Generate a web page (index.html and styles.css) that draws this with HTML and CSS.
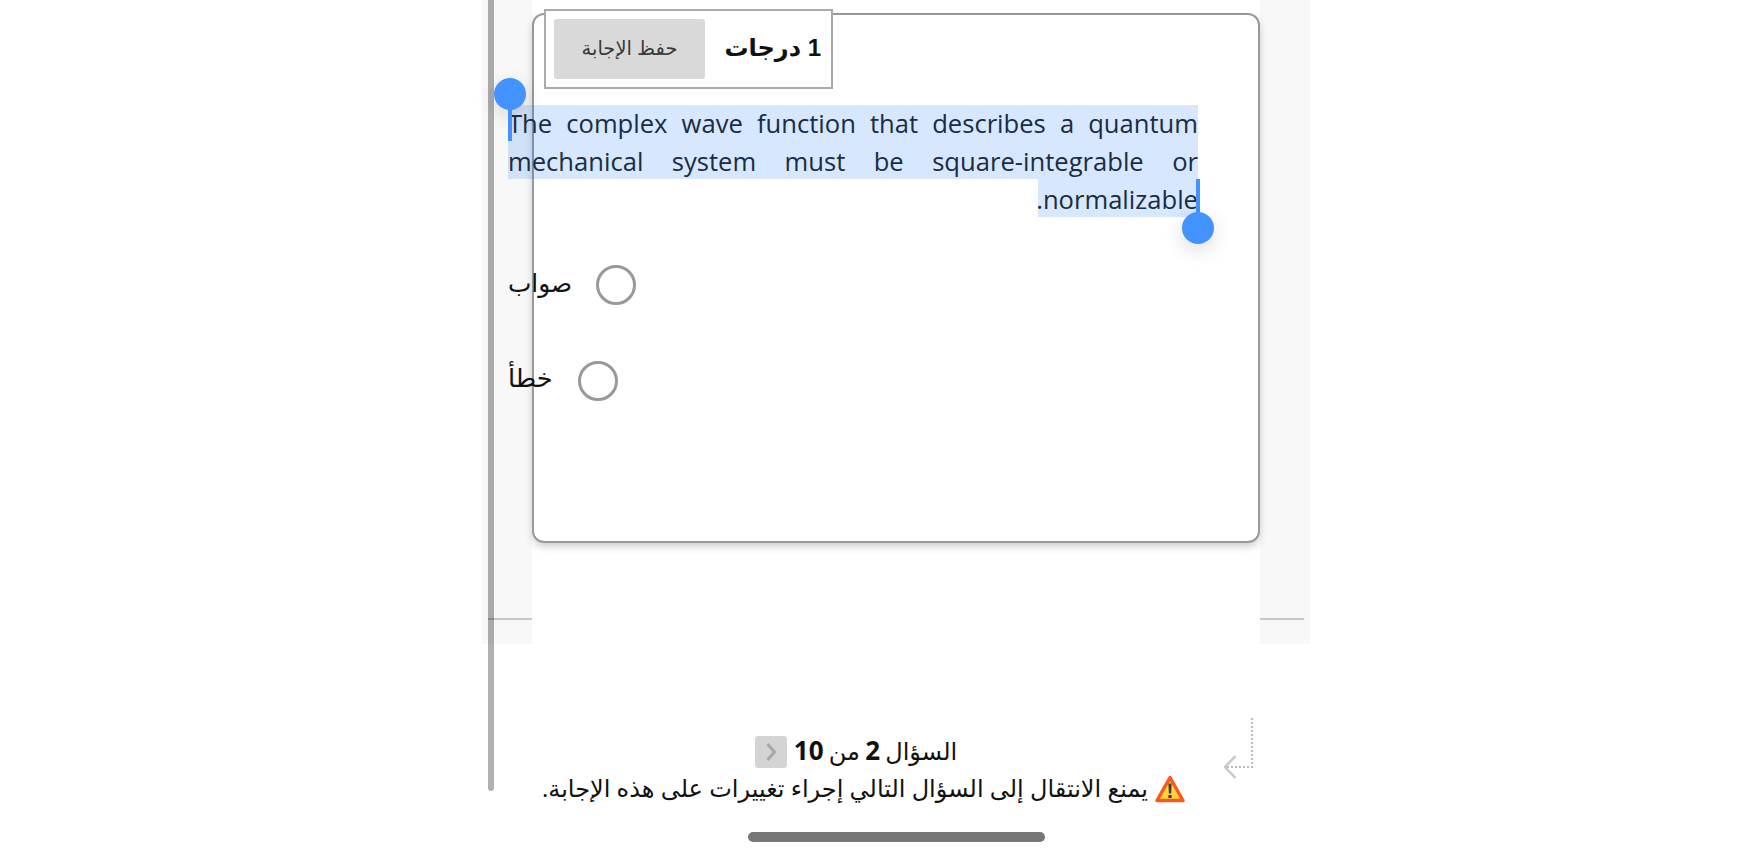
FILE: index.html
```html
<!DOCTYPE html>
<html lang="ar">
<head>
<meta charset="utf-8">
<title>السؤال 2 من 10</title>
<link rel="stylesheet" href="styles.css">
</head>
<body>
<div class="scrollbar"></div>
<main class="panel">
  <div class="column">
    <section class="card">
      <header class="points-box">
        <button class="save-btn" type="button">حفظ الإجابة</button>
        <span class="points" dir="rtl">1 درجات</span>
      </header>
      <div class="question">
        <p class="question-text" dir="rtl">The complex wave function that describes a quantum mechanical system must be square-integrable or normalizable.</p>
        <div class="sel sel-full"></div>
        <div class="sel sel-last"></div>
        <div class="handle handle-start"><i class="knob"></i><i class="stem"></i></div>
        <div class="handle handle-end"><i class="stem"></i><i class="knob"></i></div>
      </div>
      <div class="options">
        <label class="option option-true"><span class="option-label">صواب</span><span class="radio"></span></label>
        <label class="option"><span class="option-label">خطأ</span><span class="radio"></span></label>
      </div>
    </section>
  </div>
</main>
<footer class="footer">
  <div class="footer-text">
    <div class="nav" dir="rtl">
      <span class="nav-label">السؤال <b>2</b> من <b>10</b></span>
      <button class="next" type="button" aria-label="next">
        <svg width="14" height="22" viewBox="0 0 14 22"><path d="M3.5 3 L10.5 11 L3.5 19" fill="none" stroke="#a9a9a9" stroke-width="3.4"/></svg>
      </button>
    </div>
    <div class="warning" dir="rtl">
      <svg class="warn-icon" width="30" height="28" viewBox="0 0 30 28"><path d="M15 2.5 L28 25.5 L2 25.5 Z" fill="#ffd23f" stroke="#f9591d" stroke-width="3.4" stroke-linejoin="round"/><path d="M13.4 8.5 h3.2 l-.5 10 h-2.2 Z" fill="#3a3a3a"/><rect x="13.4" y="20" width="3.2" height="3" fill="#3a3a3a"/></svg>
      <span class="warning-text">يمنع الانتقال إلى السؤال التالي إجراء تغييرات على هذه الإجابة.</span>
    </div>
  </div>
  <svg class="return-icon" width="31" height="64" viewBox="0 0 31 64"><path d="M28 1 V50 H2" fill="none" stroke="#bdbdbd" stroke-width="2.2" stroke-dasharray="2 2"/><path d="M11.5 39 L1 50 L11.5 61" fill="none" stroke="#c6c6c6" stroke-width="2.4"/></svg>
</footer>
<div class="home-indicator"></div>
</body>
</html>
```
FILE: styles.css
```css
* { box-sizing: border-box; }
html, body { margin: 0; padding: 0; }
body {
  width: 1749px;
  height: 858px;
  overflow: hidden;
  background: #fff;
  color: #111;
  font-family: "Open Sans", "Noto Sans", "DejaVu Sans", sans-serif;
  position: relative;
}
.scrollbar {
  position: absolute;
  left: 488px;
  top: 0;
  width: 6px;
  height: 791px;
  background: rgba(0, 0, 0, .31);
  border-radius: 0 0 3px 3px;
  z-index: 5;
}
.panel {
  position: relative;
  width: 828px;
  height: 644px;
  margin-left: 482px;
  padding: 0 50px;
  background: #f8f8f8;
}
.panel::before {
  content: "";
  position: absolute;
  left: 6px;
  right: 6px;
  top: 618px;
  height: 2px;
  background: #c8c8c8;
}
.column {
  position: relative;
  height: 100%;
  padding-top: 13px;
  background: #fff;
}
.card {
  height: 530px;
  border: 2px solid #999;
  border-radius: 12px;
  background: #fff;
  box-shadow: 0 4px 9px -1px rgba(0, 0, 0, .22);
}
.points-box {
  display: flex;
  align-items: center;
  justify-content: space-between;
  width: 289px;
  height: 80px;
  margin: -6px 0 0 10px;
  padding: 0 10px 0 8px;
  border: 2px solid #aaa;
  background: #fff;
}
.save-btn {
  width: 151px;
  height: 60px;
  border: 0;
  border-radius: 3px;
  background: #d9d9d9;
  color: #3a3a3a;
  padding: 0 0 4px;
  font: 19.5px "Open Sans", "DejaVu Sans", sans-serif;
}
.points {
  margin-top: -2px;
  font-size: 24px;
  font-weight: 700;
  font-family: "Liberation Sans", "DejaVu Sans", sans-serif;
}
.question {
  position: relative;
  width: 690px;
  margin: 16px 0 0 -26px;
}
.question-text {
  margin: 0;
  font-size: 25.6px;
  line-height: 38px;
  text-align: justify;
  color: #222;
}
.sel {
  position: absolute;
  background: rgba(0, 100, 240, .157);
  pointer-events: none;
}
.sel-full { left: 0; right: 0; top: 0; height: 74px; }
.sel-last { right: 0; top: 74px; width: 160px; height: 38px; }
.handle {
  position: absolute;
  width: 32px;
  display: flex;
  flex-direction: column;
  align-items: center;
  z-index: 4;
}
.handle-start { left: -14px; top: -27px; }
.handle-end { left: 674px; top: 74px; }
.knob {
  width: 32px;
  height: 32px;
  border-radius: 50%;
  background: #4293ff;
  box-shadow: 0 6px 20px rgba(0, 0, 0, .14);
}
.stem { width: 4px; background: #4293ff; }
.handle-start .stem { height: 32px; margin-top: -1px; }
.handle-end .stem { height: 33px; }
.options {
  display: flex;
  flex-direction: column;
  margin-left: -26px;
  margin-top: 46px;
  gap: 56px;
}
.option {
  display: flex;
  align-items: center;
  gap: 25px;
  height: 40px;
}
.option-true { gap: 24px; }
.option-label {
  font-size: 25.6px;
  line-height: 30px;
  margin-top: -7px;
}
.option-true .option-label { font-size: 24.8px; }
.radio {
  width: 40px;
  height: 40px;
  border: 3px solid #999;
  border-radius: 50%;
  background: #fff;
}
.footer {
  display: flex;
  align-items: flex-start;
  margin: 73px 0 0 543px;
}
.footer-text {
  width: 641px;
  padding-top: 19px;
  display: flex;
  flex-direction: column;
  align-items: center;
  gap: 7px;
}
.nav {
  display: flex;
  align-items: center;
  gap: 7px;
  height: 32px;
  margin-right: 15px;
  font-size: 24px;
}
.nav-label { margin-top: -4px; word-spacing: -1px; }
.nav b { font-weight: 700; font-size: 26px; }
.next {
  display: flex;
  align-items: center;
  justify-content: center;
  width: 32px;
  height: 32px;
  padding: 0;
  border: 0;
  border-radius: 3px;
  background: #d4d4d4;
}
.warning {
  display: flex;
  align-items: center;
  gap: 7px;
  height: 28px;
  font-size: 24px;
  white-space: nowrap;
}
.warning-text { margin-top: -4px; }
.warn-icon { flex: none; }
.return-icon { flex: none; margin-left: 40px; }
.home-indicator {
  width: 297px;
  height: 10px;
  margin: 29px 0 0 748px;
  border-radius: 5px;
  background: #777;
}
```
